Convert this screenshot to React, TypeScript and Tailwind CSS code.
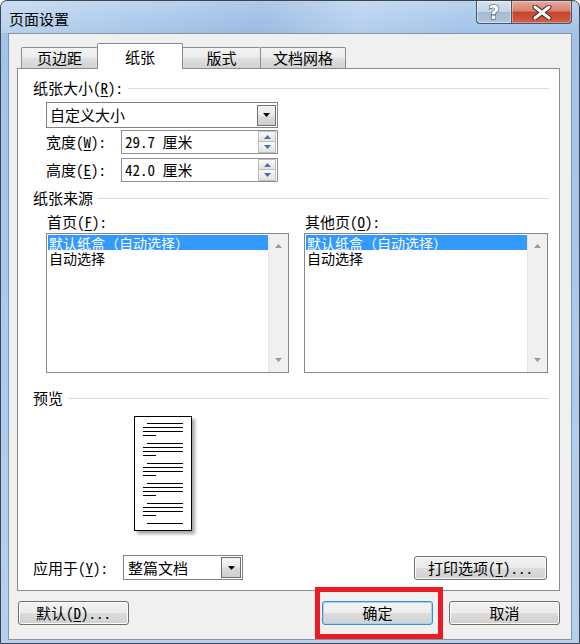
import React from "react";

const U = ({ c }: { c: string }) => (
  <span className="underline decoration-1 underline-offset-[2px]">{c}</span>
);

const TriDown = ({ color = "#000" }: { color?: string }) => (
  <svg width="7" height="4" viewBox="0 0 7 4">
    <path d="M0 0h7L3.5 4z" fill={color} />
  </svg>
);
const TriUp = ({ color = "#000" }: { color?: string }) => (
  <svg width="7" height="4" viewBox="0 0 7 4">
    <path d="M3.5 0L7 4H0z" fill={color} />
  </svg>
);

function SectionHeader({ children }: { children: React.ReactNode }) {
  return (
    <div className="flex h-[18px] items-center pl-[15px] pr-[10px]">
      <span className="whitespace-nowrap leading-[18px]">{children}</span>
      <div className="ml-[5px] h-px flex-1 bg-[#d5dfe5]" />
    </div>
  );
}

function ComboArrow() {
  return (
    <div className="mr-px flex h-[21px] w-[19px] items-center justify-center border border-[#707070] bg-[linear-gradient(180deg,#f2f2f2_0%,#ebebeb_50%,#dddddd_50%,#cfcfcf_100%)]">
      <TriDown />
    </div>
  );
}

function SpinBox({ value }: { value: string }) {
  return (
    <div className="flex h-[24px] w-[157px] items-center border border-[#8f9196] bg-white">
      <span className="flex-1 pl-[3px] leading-[18px]">{value}</span>
      <div className="mr-px flex flex-col">
        <div className="flex h-[11px] w-[18px] items-center justify-center border border-[#bdbdbd] bg-[linear-gradient(180deg,#fafafa,#e3e3e3)]">
          <TriUp color="#4b6fa8" />
        </div>
        <div className="flex h-[11px] w-[18px] items-center justify-center border border-t-0 border-[#bdbdbd] bg-[linear-gradient(180deg,#fafafa,#e3e3e3)]">
          <TriDown color="#4b6fa8" />
        </div>
      </div>
    </div>
  );
}

function ListBox() {
  return (
    <div className="flex h-[140px] border border-[#828790] bg-white">
      <div className="flex-1 pl-px pt-px text-[14px]">
        <div className="flex h-[15px] items-center whitespace-nowrap bg-[#3399ff] pl-px leading-[14px] text-white">
          默认纸盒（自动选择）
        </div>
        <div className="flex h-[15px] items-center whitespace-nowrap pl-px leading-[14px]">自动选择</div>
      </div>
      <div className="flex w-[20px] flex-col items-center justify-between border-l border-[#e6e6e6] bg-[#f0f0f0] py-[10px]">
        <TriUp color="#9a9a9a" />
        <TriDown color="#9a9a9a" />
      </div>
    </div>
  );
}

function WinButton({
  children,
  focused,
  className = "",
}: {
  children: React.ReactNode;
  focused?: boolean;
  className?: string;
}) {
  return (
    <div
      className={
        "flex h-[24px] items-center justify-center rounded-[3px] border leading-[18px] " +
        (focused
          ? "border-[#3c8fd0] bg-[linear-gradient(180deg,#f4f4f4_0%,#ececec_50%,#dedede_50%,#d2d2d2_100%)] shadow-[inset_0_0_0_1px_#9fd5f3] "
          : "border-[#707070] bg-[linear-gradient(180deg,#f2f2f2_0%,#ebebeb_50%,#dddddd_50%,#cfcfcf_100%)] shadow-[inset_0_0_0_1px_#fbfbfb] ") +
        className
      }
    >
      {children}
    </div>
  );
}

function PagePreview() {
  const groups = [0, 1, 2, 3, 4];
  return (
    <div className="ml-[116px] mt-[9px] h-[115px] w-[58px] border border-black bg-white shadow-[3px_3px_3px_rgba(0,0,0,0.35)]">
      <svg width="56" height="113" viewBox="0 0 56 113">
        {groups.map((g) => {
          const y = 6 + g * 20;
          return (
            <g key={g} fill="#000">
              <rect x="12" y={y} width="36" height="1" />
              <rect x="8" y={y + 4} width="40" height="1" />
              <rect x="8" y={y + 8} width="40" height="1" />
              <rect x="8" y={y + 12} width="13" height="1" />
            </g>
          );
        })}
        <rect x="12" y="106" width="36" height="1" fill="#000" />
      </svg>
    </div>
  );
}

const tabBase =
  "flex items-center justify-center border border-b-0 border-[#898c95] rounded-t-[2px] leading-[18px]";
const tabOff =
  tabBase +
  " h-[21px] bg-[linear-gradient(180deg,#f3f3f3_0%,#ececec_45%,#dedede_55%,#d3d3d3_100%)]";

export default function App() {
  return (
    <div className="h-[644px] w-[580px] overflow-hidden bg-white">
      <div className="flex h-[644px] w-[580px] flex-col overflow-hidden rounded-t-[7px] border border-[#3b4656] bg-[linear-gradient(180deg,#bad2ee_0%,#a2c3e8_5%,#a8c8eb_40%,#b6d1ef_100%)] text-[15px] text-black [font-family:'Noto_Sans_Mono_CJK_SC','Noto_Sans_CJK_SC',sans-serif]">
        {/* Title bar */}
        <div className="flex h-[32px] items-start bg-[linear-gradient(100deg,rgba(255,255,255,0.25)_0%,rgba(255,255,255,0)_30%,rgba(90,130,180,0.12)_45%,rgba(255,255,255,0.18)_62%,rgba(255,255,255,0)_80%)]">
          <div className="pl-[8px] pt-[9px] leading-[18px] [font-family:'Noto_Sans_CJK_SC',sans-serif]">
            页面设置
          </div>
          <div className="ml-auto mr-[7px] flex">
            <div className="flex h-[23px] w-[35px] items-center justify-center rounded-bl-[4px] border border-r-0 border-t-0 border-[#44566e] bg-[linear-gradient(180deg,#d6e2ef_0%,#c3d3e5_48%,#a3b9d2_52%,#b2c6dd_100%)] shadow-[inset_0_0_0_1px_rgba(255,255,255,0.45)]">
              <span className="text-[19px] font-bold leading-none text-white [-webkit-text-stroke:1.2px_#3c4b5e] [paint-order:stroke_fill] [font-family:'DejaVu_Sans',sans-serif]">
                ?
              </span>
            </div>
            <div className="flex h-[23px] w-[61px] items-center justify-center rounded-br-[4px] border border-t-0 border-[#44566e] bg-[linear-gradient(180deg,#e6a99c_0%,#d9806d_45%,#c5432b_52%,#d6604a_100%)] shadow-[inset_0_0_0_1px_rgba(255,255,255,0.35)]">
              <svg width="20" height="15" viewBox="0 0 20 15">
                <path d="M3 2L17 13M17 2L3 13" stroke="#3a2a28" strokeWidth="5" strokeLinecap="round" />
                <path d="M3 2L17 13M17 2L3 13" stroke="#ffffff" strokeWidth="3" strokeLinecap="round" />
              </svg>
            </div>
          </div>
        </div>

        {/* Client area */}
        <div className="ml-[7px] flex h-[607px] w-[564px] flex-col border border-[#8395ab] bg-[#f0f0f0] pl-[8px] pt-[9px]">
          {/* Tabs */}
          <div className="flex h-[25px] items-end pl-[4px]">
            <div className={tabOff + " w-[77px]"}>页边距</div>
            <div className={tabBase + " relative z-10 -mb-px -ml-px h-[26px] w-[86px] bg-white"}>纸张</div>
            <div className={tabOff + " -ml-px w-[79px]"}>版式</div>
            <div className={tabOff + " -ml-px w-[86px]"}>文档网格</div>
          </div>

          {/* Panel */}
          <div className="flex h-[523px] w-[543px] flex-col border border-[#898c95] bg-white pb-[10px]">
            <div className="mt-[10px]">
              <SectionHeader>
                纸张大小(<U c="R" />):
              </SectionHeader>
            </div>

            <div className="ml-[28px] flex flex-col">
              <div className="mt-[5px] flex h-[26px] w-[232px] items-center border border-[#828282] bg-white">
                <span className="flex-1 pl-[3px] leading-[18px]">自定义大小</span>
                <ComboArrow />
              </div>
              <div className="mt-[2px] flex items-center">
                <span className="w-[75px] leading-[18px]">
                  宽度(<U c="W" />):
                </span>
                <SpinBox value="29.7 厘米" />
              </div>
              <div className="mt-[4px] flex items-center">
                <span className="w-[75px] leading-[18px]">
                  高度(<U c="E" />):
                </span>
                <SpinBox value="42.0 厘米" />
              </div>
            </div>

            <div className="mt-[7px]">
              <SectionHeader>纸张来源</SectionHeader>
            </div>

            <div className="ml-[28px] mt-[6px] flex gap-[15px]">
              <div className="flex w-[243px] flex-col">
                <span className="h-[18px] pl-px leading-[18px]">
                  首页(<U c="F" />):
                </span>
                <div className="mt-[2px]">
                  <ListBox />
                </div>
              </div>
              <div className="flex w-[244px] flex-col">
                <span className="h-[18px] pl-px leading-[18px]">
                  其他页(<U c="O" />):
                </span>
                <div className="mt-[2px]">
                  <ListBox />
                </div>
              </div>
            </div>

            <div className="mt-[16px]">
              <SectionHeader>预览</SectionHeader>
            </div>

            <PagePreview />

            <div className="mt-auto flex h-[25px] items-center pl-[15px] pr-[12px]">
              <span className="w-[90px] leading-[18px]">
                应用于(<U c="Y" />):
              </span>
              <div className="flex h-[25px] w-[120px] items-center border border-[#828282] bg-white">
                <span className="flex-1 pl-[4px] leading-[18px]">整篇文档</span>
                <div className="mr-px flex h-[21px] w-[20px] items-center justify-center border border-[#707070] bg-[linear-gradient(180deg,#f2f2f2_0%,#ebebeb_50%,#dddddd_50%,#cfcfcf_100%)]">
                  <TriDown />
                </div>
              </div>
              <WinButton className="ml-auto w-[133px]">
                打印选项(<U c="T" />)...
              </WinButton>
            </div>
          </div>

          {/* Bottom buttons */}
          <div className="mt-[10px] flex items-start pr-[11px]">
            <WinButton className="ml-px w-[111px]">
              默认(<U c="D" />)...
            </WinButton>
            <div className="relative ml-auto">
              <WinButton focused className="w-[111px]">
                确定
              </WinButton>
              <div className="pointer-events-none absolute left-[-7px] top-[-14px] h-[52px] w-[128px] border-[5px] border-[#ed1c24]" />
            </div>
            <WinButton className="ml-[16px] w-[111px]">取消</WinButton>
          </div>
        </div>
      </div>
    </div>
  );
}
